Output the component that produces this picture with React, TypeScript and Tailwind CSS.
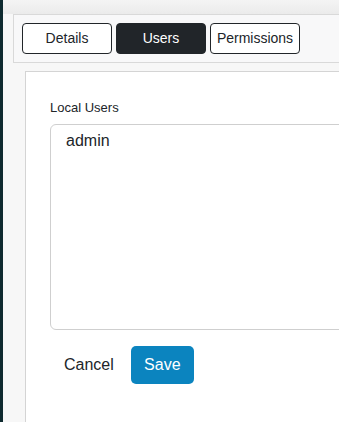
import React from "react";

const tabs = ["Details", "Users", "Permissions"];

const App = () => {
    return (
        <div
            className="flex h-[422px] w-[339px] overflow-hidden bg-[#f7f7f7]"
            style={{ fontFamily: '"Liberation Sans", Arial, sans-serif' }}
        >
            <div className="w-[3px] shrink-0 bg-[#0e2a2f]" />
            <div className="flex min-w-0 flex-1 flex-col">
                <div className="h-[14px] shrink-0 bg-gradient-to-b from-[#f4f4f4] to-[#ebebeb]" />
                <div className="ml-[10px] flex h-[49px] w-[360px] shrink-0 items-center gap-[4px] border-y border-l border-[#d9d9d9] bg-[#f8f8f9] pl-[8px]">
                    {tabs.map((t) => (
                        <button
                            key={t}
                            className={
                                "flex h-[31px] w-[90px] items-center justify-center rounded-[4px] border text-[14px] " +
                                (t === "Users"
                                    ? "border-[#212529] bg-[#212529] text-white"
                                    : "border-[#212529] bg-white text-[#212529]")
                            }
                        >
                            {t}
                        </button>
                    ))}
                </div>
                <div className="ml-[22px] mt-[8px] flex w-[360px] flex-1 flex-col border-l border-t border-[#d4d4d4] bg-white pl-[24px] pt-[26px]">
                    <label className="text-[13px] text-[#212529]">Local Users</label>
                    <div className="mt-[6px] h-[206px] w-[330px] rounded-[6px] border border-[#cfcfcf] bg-white px-[15px] pt-[4px] text-[16px] text-[#212529]">
                        admin
                    </div>
                    <div className="mt-[16px] flex items-center gap-[5px] pl-[2px]">
                        <button className="px-[12px] text-[16px] text-[#212529]">Cancel</button>
                        <button className="h-[38px] w-[63px] rounded-[5px] bg-[#0b84bf] text-[16px] text-white">
                            Save
                        </button>
                    </div>
                </div>
            </div>
        </div>
    );
};

export default App;
